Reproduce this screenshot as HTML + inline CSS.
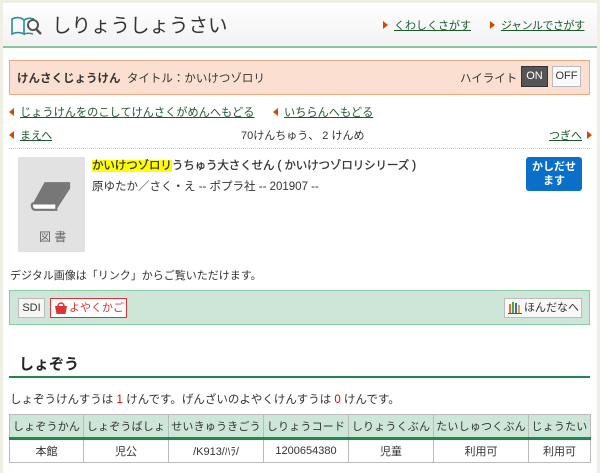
<!DOCTYPE html>
<html><head><meta charset="utf-8"><style>
*{margin:0;padding:0;box-sizing:border-box}
body{width:600px;height:468px;overflow:hidden;background:#f0efe4;font-family:"Liberation Sans","Noto Sans CJK JP",sans-serif;font-size:11px;color:#333;position:relative}
.page{position:absolute;left:3px;top:3px;width:594px;height:470px;background:#fff}
.abs{position:absolute;white-space:nowrap}
a{color:#1c5a2e;text-decoration:underline}
.tri{display:inline-block;width:0;height:0;border-top:4px solid transparent;border-bottom:4px solid transparent;border-left:5px solid #d04a00;margin-right:6px;vertical-align:0}
.tril{display:inline-block;width:0;height:0;border-top:4px solid transparent;border-bottom:4px solid transparent;border-right:5px solid #d04a00;margin-right:6px;vertical-align:0}
table{border-collapse:collapse;position:absolute;left:9px;top:414px;width:581px;table-layout:fixed}
td,th{border:1px solid #bbb;font-weight:normal;text-align:center;font-size:11px;padding:0;white-space:nowrap;overflow:hidden}
th{background:#cde6d8;height:24px;border-bottom:3px solid #1d8a4a;letter-spacing:0.2px}
td{height:24px}
</style></head><body>
<div class="page"></div>
<div class="abs" style="left:3px;top:3px;width:594px;height:43px;background:linear-gradient(#fff,#f2f2f2)"></div>
<div class="abs" style="left:3px;top:46px;width:594px;height:2px;background:#8cc3a0"></div>
<svg class="abs" style="left:10px;top:14px" width="32" height="24" viewBox="0 0 32 24"><path d="M2 5v15c4-2 8-2 12 0V6C10 3 6 3 2 5z" fill="none" stroke="#2a8c9a" stroke-width="1.6"/><path d="M14 6c3-2 7-2 10-1" fill="none" stroke="#2a8c9a" stroke-width="1.6"/><path d="M14 20c3-1 6-1 9 0" fill="none" stroke="#2a8c9a" stroke-width="1.6"/><circle cx="23" cy="11" r="5" fill="#fff" stroke="#555" stroke-width="2"/><path d="M26 15l5 5" stroke="#555" stroke-width="2.5"/></svg>
<div class="abs" style="left:52px;top:9px;font-size:19.5px;color:#333">しりょうしょうさい</div>
<div class="abs" style="left:383px;top:17px;font-size:11px"><span class="tri"></span><a>くわしくさがす</a></div>
<div class="abs" style="left:490px;top:17px;font-size:11px;letter-spacing:-0.5px"><span class="tri"></span><a>ジャンルでさがす</a></div>
<div class="abs" style="left:9px;top:60px;width:581px;height:35px;background:#fbdfd1;border:1px solid #f0a883"></div>
<div class="abs" style="left:17px;top:70px;font-size:11.5px"><b>けんさくじょうけん</b>&nbsp; タイトル：かいけつゾロリ</div>
<div class="abs" style="left:460px;top:70px;font-size:11.5px">ハイライト：</div>
<div class="abs" style="left:521px;top:66px;width:27px;height:21px;background:#555;color:#fff;text-align:center;line-height:19px;border:1px solid #333">ON</div>
<div class="abs" style="left:552px;top:66px;width:29px;height:21px;background:#fafafa;color:#333;text-align:center;line-height:19px;border:1px solid #bbb">OFF</div>
<div class="abs" style="left:9px;top:104px;font-size:11.2px"><span class="tril"></span><a>じょうけんをのこしてけんさくがめんへもどる</a></div>
<div class="abs" style="left:273px;top:104px;font-size:11.2px"><span class="tril"></span><a>いちらんへもどる</a></div>
<div class="abs" style="left:9px;top:127px"><span class="tril"></span><a>まえへ</a></div>
<div class="abs" style="left:241px;top:127px">70けんちゅう、 2 けんめ</div>
<div class="abs" style="left:549px;top:127px"><a>つぎへ</a><span class="tri" style="margin:0 0 0 5px"></span></div>
<div class="abs" style="left:9px;top:148px;width:581px;border-top:1px dotted #ccc"></div>
<div class="abs" style="left:18px;top:157px;width:67px;height:95px;background:#e2e2e2"></div>
<svg class="abs" style="left:29px;top:180px" width="44" height="34" viewBox="0 0 40 32"><path d="M14 2h24L25 22H3z" fill="#777"/><path d="M3 22h22v6H5c-3 0-4-5-2-6z" fill="#fff" stroke="#777" stroke-width="2"/><path d="M25 22l13-20v6L25 28z" fill="#777"/></svg>
<div class="abs" style="left:39px;top:228px;color:#666;font-size:12px">図 書</div>
<div class="abs" style="left:92px;top:157px;font-size:11.5px;letter-spacing:-0.1px"><span style="background:#ffff00;-webkit-text-stroke:0.3px #333">かいけつゾロリ</span><span style="-webkit-text-stroke:0.3px #333">うちゅう大さくせん ( かいけつゾロリシリーズ )</span></div>
<div class="abs" style="left:92px;top:178px;font-size:11.5px">原ゆたか／さく・え -- ポプラ社 -- 201907 --</div>
<div class="abs" style="left:526px;top:157px;width:56px;height:34px;background:#0a6fc8;border-radius:3px;color:#fff;font-weight:bold;text-align:center;line-height:14px;padding-top:3px;font-size:11px">かしだせ<br>ます</div>
<div class="abs" style="left:10px;top:267px">デジタル画像は「リンク」からご覧いただけます。</div>
<div class="abs" style="left:9px;top:290px;width:581px;height:35px;background:#cde6d8;border:1px solid #8ccaa3"></div>
<div class="abs" style="left:18px;top:298px;width:27px;height:20px;background:#f5f5f5;border:1px solid #bbb;text-align:center;line-height:18px;font-size:11px">SDI</div>
<div class="abs" style="left:50px;top:298px;width:77px;height:20px;background:#fff;border:1px solid #d33;color:#d33;line-height:18px;padding-left:18px;font-size:11px">よやくかご</div>
<svg class="abs" style="left:55px;top:301px" width="12" height="13" viewBox="0 0 12 13"><path d="M3 5a3 3 0 0 1 6 0" fill="none" stroke="#d33" stroke-width="1.5"/><path d="M0 5h12l-1.5 8h-9z" fill="#d33"/></svg>
<div class="abs" style="left:504px;top:298px;width:78px;height:20px;background:#f8f8f8;border:1px solid #bbb;line-height:18px;padding-left:19px;font-size:11px">ほんだなへ</div>
<svg class="abs" style="left:508px;top:301px" width="14" height="13"><rect x="1" y="3" width="2" height="9" fill="#e64"/><rect x="4" y="1" width="2" height="11" fill="#4a4"/><rect x="7" y="2" width="2" height="10" fill="#46c"/><rect x="10" y="4" width="2" height="8" fill="#da3"/><rect x="0" y="12" width="14" height="1" fill="#555"/></svg>
<div class="abs" style="left:19px;top:353px;font-size:15px;font-weight:bold;color:#222">しょぞう</div>
<div class="abs" style="left:9px;top:376px;width:581px;height:2px;background:#1d8a4a"></div>
<div class="abs" style="left:10px;top:391px;font-size:11.5px">しょぞうけんすうは <span style="color:#e00">1</span> けんです。げんざいのよやくけんすうは <span style="color:#e00">0</span> けんです。</div>
<table>
<colgroup><col style="width:74px"><col style="width:85px"><col style="width:95px"><col style="width:85px"><col style="width:85px"><col style="width:95px"><col style="width:62px"></colgroup>
<tr><th>しょぞうかん</th><th>しょぞうばしょ</th><th>せいきゅうきごう</th><th>しりょうコード</th><th>しりょうくぶん</th><th>たいしゅつくぶん</th><th>じょうたい</th></tr>
<tr><td>本館</td><td>児公</td><td>/K913/ﾊﾗ/</td><td>1200654380</td><td>児童</td><td>利用可</td><td>利用可</td></tr>
</table>
</body></html>
